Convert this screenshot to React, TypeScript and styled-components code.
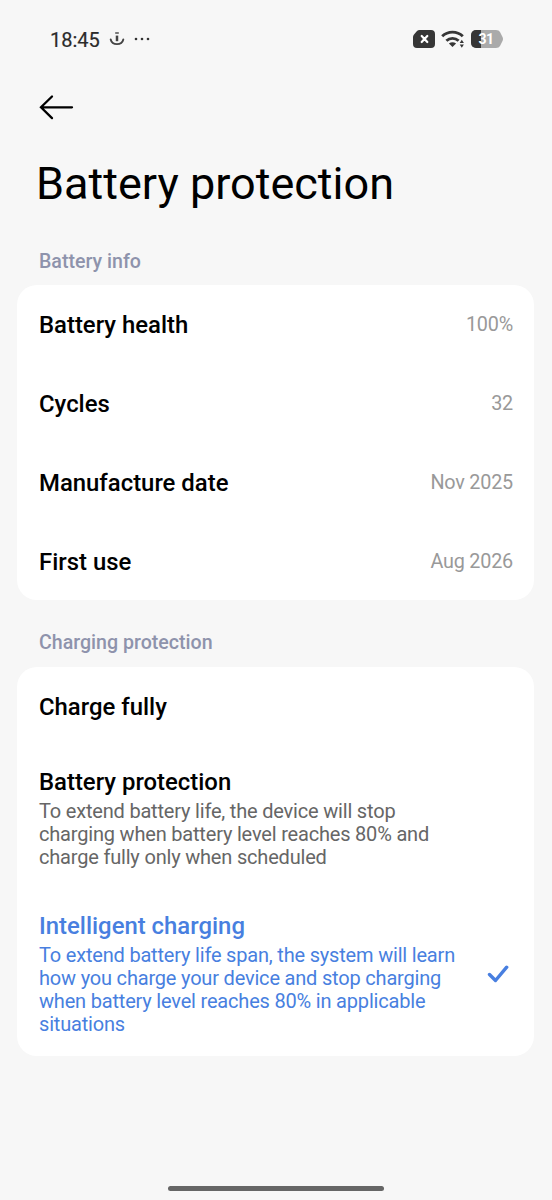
import React from 'react';
import styled, { createGlobalStyle } from 'styled-components';

const Global = createGlobalStyle`
  * { box-sizing: border-box; }
  body { margin: 0; background: #f7f7f7; font-family: Roboto, "Liberation Sans", sans-serif; color: #000; }
`;

const Screen = styled.div`
  width: 552px;
  height: 1200px;
  background: #f7f7f7;
  display: flex;
  flex-direction: column;
  overflow: hidden;
`;
const StatusBar = styled.header`
  height: 78px;
  padding: 0 49px 0 50px;
  display: flex;
  align-items: center;
  justify-content: space-between;
`;
const StatusGroup = styled.div<{ $gap: number }>`
  display: flex;
  align-items: center;
  gap: ${(p) => p.$gap}px;
  svg { display: block; }
`;
const Clock = styled.span`
  font-size: 20px;
  line-height: 24px;
  padding-top: 2px;
  color: #2b2b2b;
  -webkit-text-stroke: 0.2px #2b2b2b;
`;
const BackButton = styled.button`
  border: 0;
  background: none;
  padding: 0;
  margin: 16px 0 0 38px;
  width: 36px;
  height: 26px;
  svg { display: block; }
`;
const Title = styled.h1`
  margin: 37px 0 0 36px;
  font-size: 45px;
  line-height: 53px;
  font-weight: 400;
`;
const SectionLabel = styled.h2<{ $top: number }>`
  margin: ${(p) => p.$top}px 0 0 39px;
  font-size: 19.6px;
  line-height: 24px;
  font-weight: 500;
  color: #8e93ac;
`;
const Card = styled.section<{ $top: number; $pad: string }>`
  margin: ${(p) => p.$top}px 18px 0 17px;
  padding: ${(p) => p.$pad};
  border-radius: 20px;
  background: #fff;
`;
const InfoRow = styled.div`
  height: 78.75px;
  padding-top: 2px;
  display: flex;
  align-items: center;
  justify-content: space-between;
`;
const Name = styled.div`
  font-size: 23.9px;
  line-height: 30px;
  font-weight: 500;
`;
const Value = styled.div`
  font-size: 19.8px;
  line-height: 24px;
  letter-spacing: -0.2px;
  color: #999;
`;
const Option = styled.div<{ $top: number; $active?: boolean }>`
  margin-top: ${(p) => p.$top}px;
  display: flex;
  align-items: center;
  justify-content: space-between;
  color: ${(p) => (p.$active ? '#487fe0' : '#000')};
`;
const Description = styled.p<{ $active?: boolean }>`
  margin: 3px 0 0;
  font-size: 20px;
  line-height: 23px;
  letter-spacing: -0.19px;
  color: ${(p) => (p.$active ? '#487fe0' : '#666')};
`;
const HomeBar = styled.div`
  width: 216px;
  height: 5px;
  border-radius: 3px;
  background: #666;
  margin: auto auto 9px;
`;

const info = [
  ['Battery health', '100%'],
  ['Cycles', '32'],
  ['Manufacture date', 'Nov 2025'],
  ['First use', 'Aug 2026'],
];

const NotificationIcon = () => (
  <svg width="16" height="16" viewBox="0 0 16 16" fill="none" stroke="#444">
    <path d="M1.700 8.500c1.500 6.200 11.100 6.200 12.600 0" strokeWidth="1.900" strokeLinecap="round" />
    <path d="M8 4.600v5.600" strokeWidth="2.500" />
    <path d="M6.200 2h3.600" strokeWidth="1.400" />
  </svg>
);

const MoreIcon = () => (
  <svg width="16" height="4" viewBox="0 0 16 4" fill="#333">
    <circle cx="2" cy="2" r="1.300" />
    <circle cx="8" cy="2" r="1.300" />
    <circle cx="14" cy="2" r="1.300" />
  </svg>
);

const NoSimIcon = () => (
  <svg width="22" height="18" viewBox="0 0 22 18">
    <path d="M6.500 0H18a4 4 0 0 1 4 4v10a4 4 0 0 1-4 4H4a4 4 0 0 1-4-4V7Q0 5.500 1 4.500L4 1Q5 0 6.500 0z" fill="#363636" />
    <path d="M8.700 6l5.600 6m0-6l-5.600 6" stroke="#fff" strokeWidth="2.200" strokeLinecap="round" />
  </svg>
);

const WifiIcon = () => (
  <svg width="24" height="18" viewBox="0 0 24 18" fill="none" stroke="#363636" strokeWidth="2.900">
    <path d="M1.200 6.300a14.800 14.800 0 0 1 20.600 0M5.400 10.800a9 9 0 0 1 12.200 0" />
    <path d="M7.900 13.500L11.500 17l3.600-3.500q-3.600-2.600-7.200 0" fill="#363636" stroke="none" />
    <path d="M18.700 13l2.100-3.300 2.100 3.300zM18.700 14.500l2.100 3.300 2.100-3.300z" fill="#363636" stroke="none" />
  </svg>
);

const BatteryIcon = () => (
  <svg width="32" height="18" viewBox="0 0 32 18">
    <path d="M5 0h20q3 0 4 2l2.500 5q1 2 0 4L29 16q-1 2-4 2H5a5 5 0 0 1-5-5V5a5 5 0 0 1 5-5z" fill="#aaa" />
    <path d="M5 0h5v18H5a5 5 0 0 1-5-5V5a5 5 0 0 1 5-5" fill="#363636" />
    <text x="15" y="14" fontSize="14" fontWeight="700" letterSpacing="-.5" fill="#fff" textAnchor="middle">31</text>
  </svg>
);

export default function App() {
  return (
    <Screen>
      <Global />
      <StatusBar>
        <StatusGroup $gap={9}>
          <Clock>18:45</Clock>
          <NotificationIcon />
          <MoreIcon />
        </StatusGroup>
        <StatusGroup $gap={6}>
          <NoSimIcon />
          <WifiIcon />
          <BatteryIcon />
        </StatusGroup>
      </StatusBar>
      <BackButton aria-label="Back">
        <svg width="36" height="26" viewBox="0 0 36 26" fill="none" stroke="#000" strokeWidth="2.300" strokeLinecap="round"><path d="M14 2.500L3 13.300l11 10.800M3 13.300h31" /></svg>
      </BackButton>
      <Title>Battery protection</Title>
      <SectionLabel $top={40}>Battery info</SectionLabel>
      <Card $top={11} $pad="0 21px 0 22px">
        {info.map(([name, value]) => (
          <InfoRow key={name}><Name>{name}</Name><Value>{value}</Value></InfoRow>
        ))}
      </Card>
      <SectionLabel $top={31}>Charging protection</SectionLabel>
      <Card $top={12} $pad="25px 25px 20px 22px">
        <Option $top={0}><Name>Charge fully</Name></Option>
        <Option $top={45}>
          <div>
            <Name>Battery protection</Name>
            <Description>To extend battery life, the device will stop<br />charging when battery level reaches 80% and<br />charge fully only when scheduled</Description>
          </div>
        </Option>
        <Option $top={42} $active>
          <div>
            <Name>Intelligent charging</Name>
            <Description $active>To extend battery life span, the system will learn<br />how you charge your device and stop charging<br />when battery level reaches 80% in applicable<br />situations</Description>
          </div>
          <svg width="22" height="20" viewBox="0 0 22 20" fill="none" stroke="#487fe0" strokeWidth="3.400" strokeLinecap="round" strokeLinejoin="round"><path d="M2.500 10.500l6 6L19.700 3.200" /></svg>
        </Option>
      </Card>
      <HomeBar />
    </Screen>
  );
}
